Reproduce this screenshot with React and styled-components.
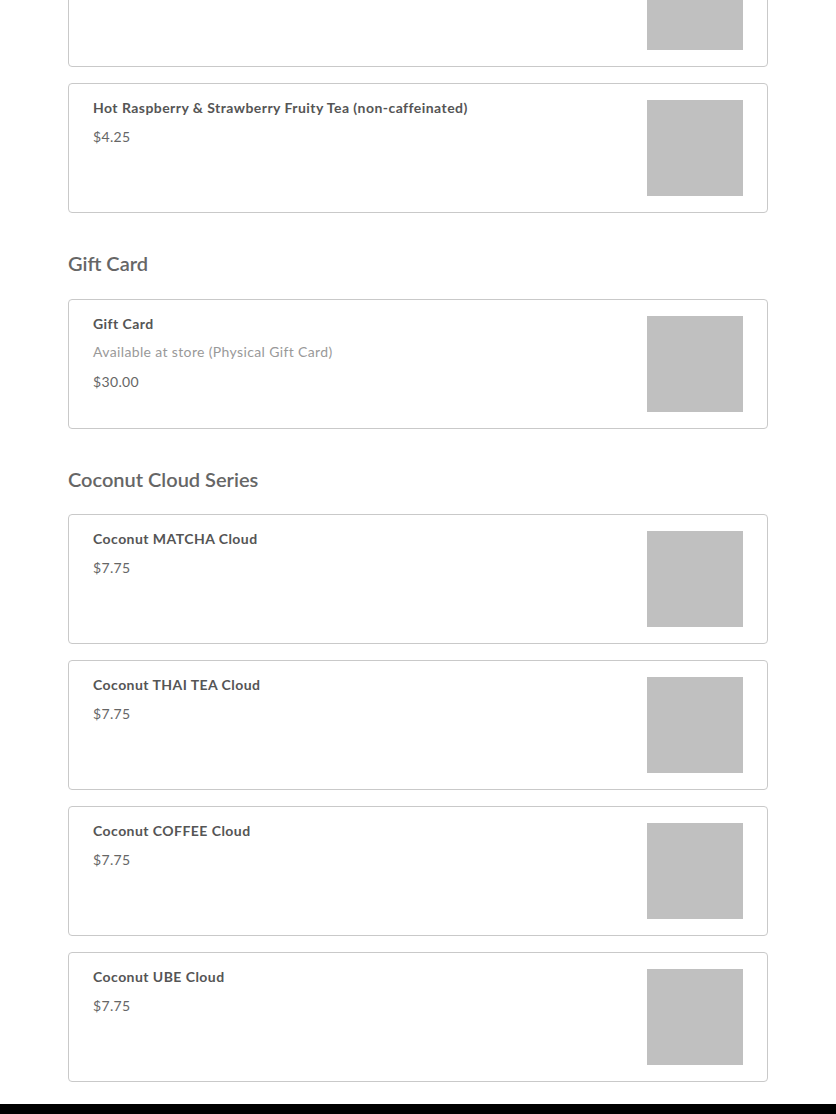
import React from "react";
import styled, { createGlobalStyle } from "styled-components";

const GlobalStyle = createGlobalStyle`
  html, body {
    margin: 0;
    padding: 0;
    background: #fff;
  }
  body {
    font-family: Lato, "Open Sans", sans-serif;
    overflow: hidden;
  }
`;

const Page = styled.div`
  display: flex;
  flex-direction: column;
  min-height: 1114px;
`;

const Menu = styled.main`
  width: 700px;
  margin: -63px auto 0;
  display: flex;
  flex-direction: column;
`;

const Section = styled.section`
  display: flex;
  flex-direction: column;
  gap: 16px;
`;

const SectionTitle = styled.h2`
  margin: 38px 0 7.5px;
  color: #666;
  font: 600 20px/24px Lato, "Open Sans", sans-serif;
`;

const Card = styled.article`
  display: flex;
  justify-content: space-between;
  border: 1px solid #c9c9c9;
  border-radius: 4px;
  padding: 16px 24px;
  background: #fff;
`;

const Info = styled.div`
  display: flex;
  flex-direction: column;
  gap: 12.5px;
`;

const ItemName = styled.h3`
  margin: 0;
  color: #555;
  letter-spacing: 0.45px;
  font: 700 14px/15px Lato, "Open Sans", sans-serif;
`;

const ItemText = styled.p`
  margin: 0;
  color: ${({ $muted }) => ($muted ? "#999" : "#666")};
  letter-spacing: 0.36px;
  font: 400 14px/17px Lato, "Open Sans", sans-serif;
`;

const Thumb = styled.div`
  width: 96px;
  height: 96px;
  flex-shrink: 0;
  background: #c0c0c0;
`;

const Footer = styled.footer`
  margin-top: auto;
  height: 10px;
  background: #000;
`;

// the first card is scrolled past the top edge, only its lower part shows
const sections = [
  {
    items: [
      {},
      { name: "Hot Raspberry & Strawberry Fruity Tea (non-caffeinated)", price: "$4.25" },
    ],
  },
  {
    title: "Gift Card",
    items: [
      {
        name: "Gift Card",
        description: "Available at store (Physical Gift Card)",
        price: "$30.00",
      },
    ],
  },
  {
    title: "Coconut Cloud Series",
    items: [
      { name: "Coconut MATCHA Cloud", price: "$7.75" },
      { name: "Coconut THAI TEA Cloud", price: "$7.75" },
      { name: "Coconut COFFEE Cloud", price: "$7.75" },
      { name: "Coconut UBE Cloud", price: "$7.75" },
    ],
  },
];

const App = () => {
  return (
    <Page>
      <GlobalStyle />
      <Menu>
        {sections.map((section, i) => (
          <Section key={i}>
            {section.title && <SectionTitle>{section.title}</SectionTitle>}
            {section.items.map((item, j) => (
              <Card key={j}>
                <Info>
                  {item.name && <ItemName>{item.name}</ItemName>}
                  {item.description && <ItemText $muted>{item.description}</ItemText>}
                  {item.price && <ItemText>{item.price}</ItemText>}
                </Info>
                <Thumb />
              </Card>
            ))}
          </Section>
        ))}
      </Menu>
      <Footer />
    </Page>
  );
};

export default App;
